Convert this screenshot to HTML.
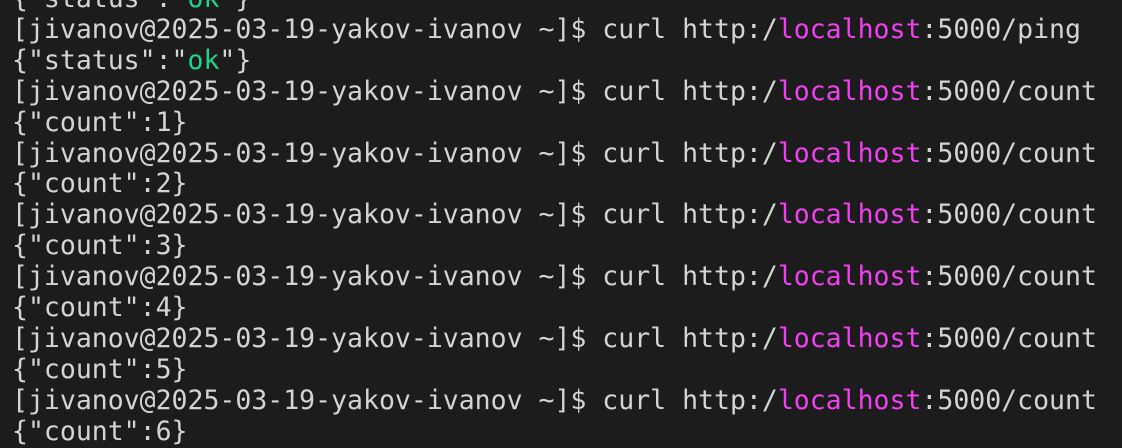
<!DOCTYPE html>
<html><head><meta charset="utf-8"><style>
html,body{margin:0;padding:0;width:1122px;height:448px;overflow:hidden;background:#1c1c1c;}
pre{margin:0;position:absolute;left:12px;top:-16px;font-family:"DejaVu Sans Mono","Liberation Mono",monospace;font-size:26.5px;line-height:30.9px;color:#d4d4d4;}
.m{color:#f040f0}.g{color:#23d18b}
</style></head><body><pre>{"status":"<span class="g">ok</span>"}
[jivanov@2025-03-19-yakov-ivanov ~]$ curl http:/<span class="m">localhost</span>:5000/ping
{"status":"<span class="g">ok</span>"}
[jivanov@2025-03-19-yakov-ivanov ~]$ curl http:/<span class="m">localhost</span>:5000/count
{"count":1}
[jivanov@2025-03-19-yakov-ivanov ~]$ curl http:/<span class="m">localhost</span>:5000/count
{"count":2}
[jivanov@2025-03-19-yakov-ivanov ~]$ curl http:/<span class="m">localhost</span>:5000/count
{"count":3}
[jivanov@2025-03-19-yakov-ivanov ~]$ curl http:/<span class="m">localhost</span>:5000/count
{"count":4}
[jivanov@2025-03-19-yakov-ivanov ~]$ curl http:/<span class="m">localhost</span>:5000/count
{"count":5}
[jivanov@2025-03-19-yakov-ivanov ~]$ curl http:/<span class="m">localhost</span>:5000/count
{"count":6}</pre></body></html>
